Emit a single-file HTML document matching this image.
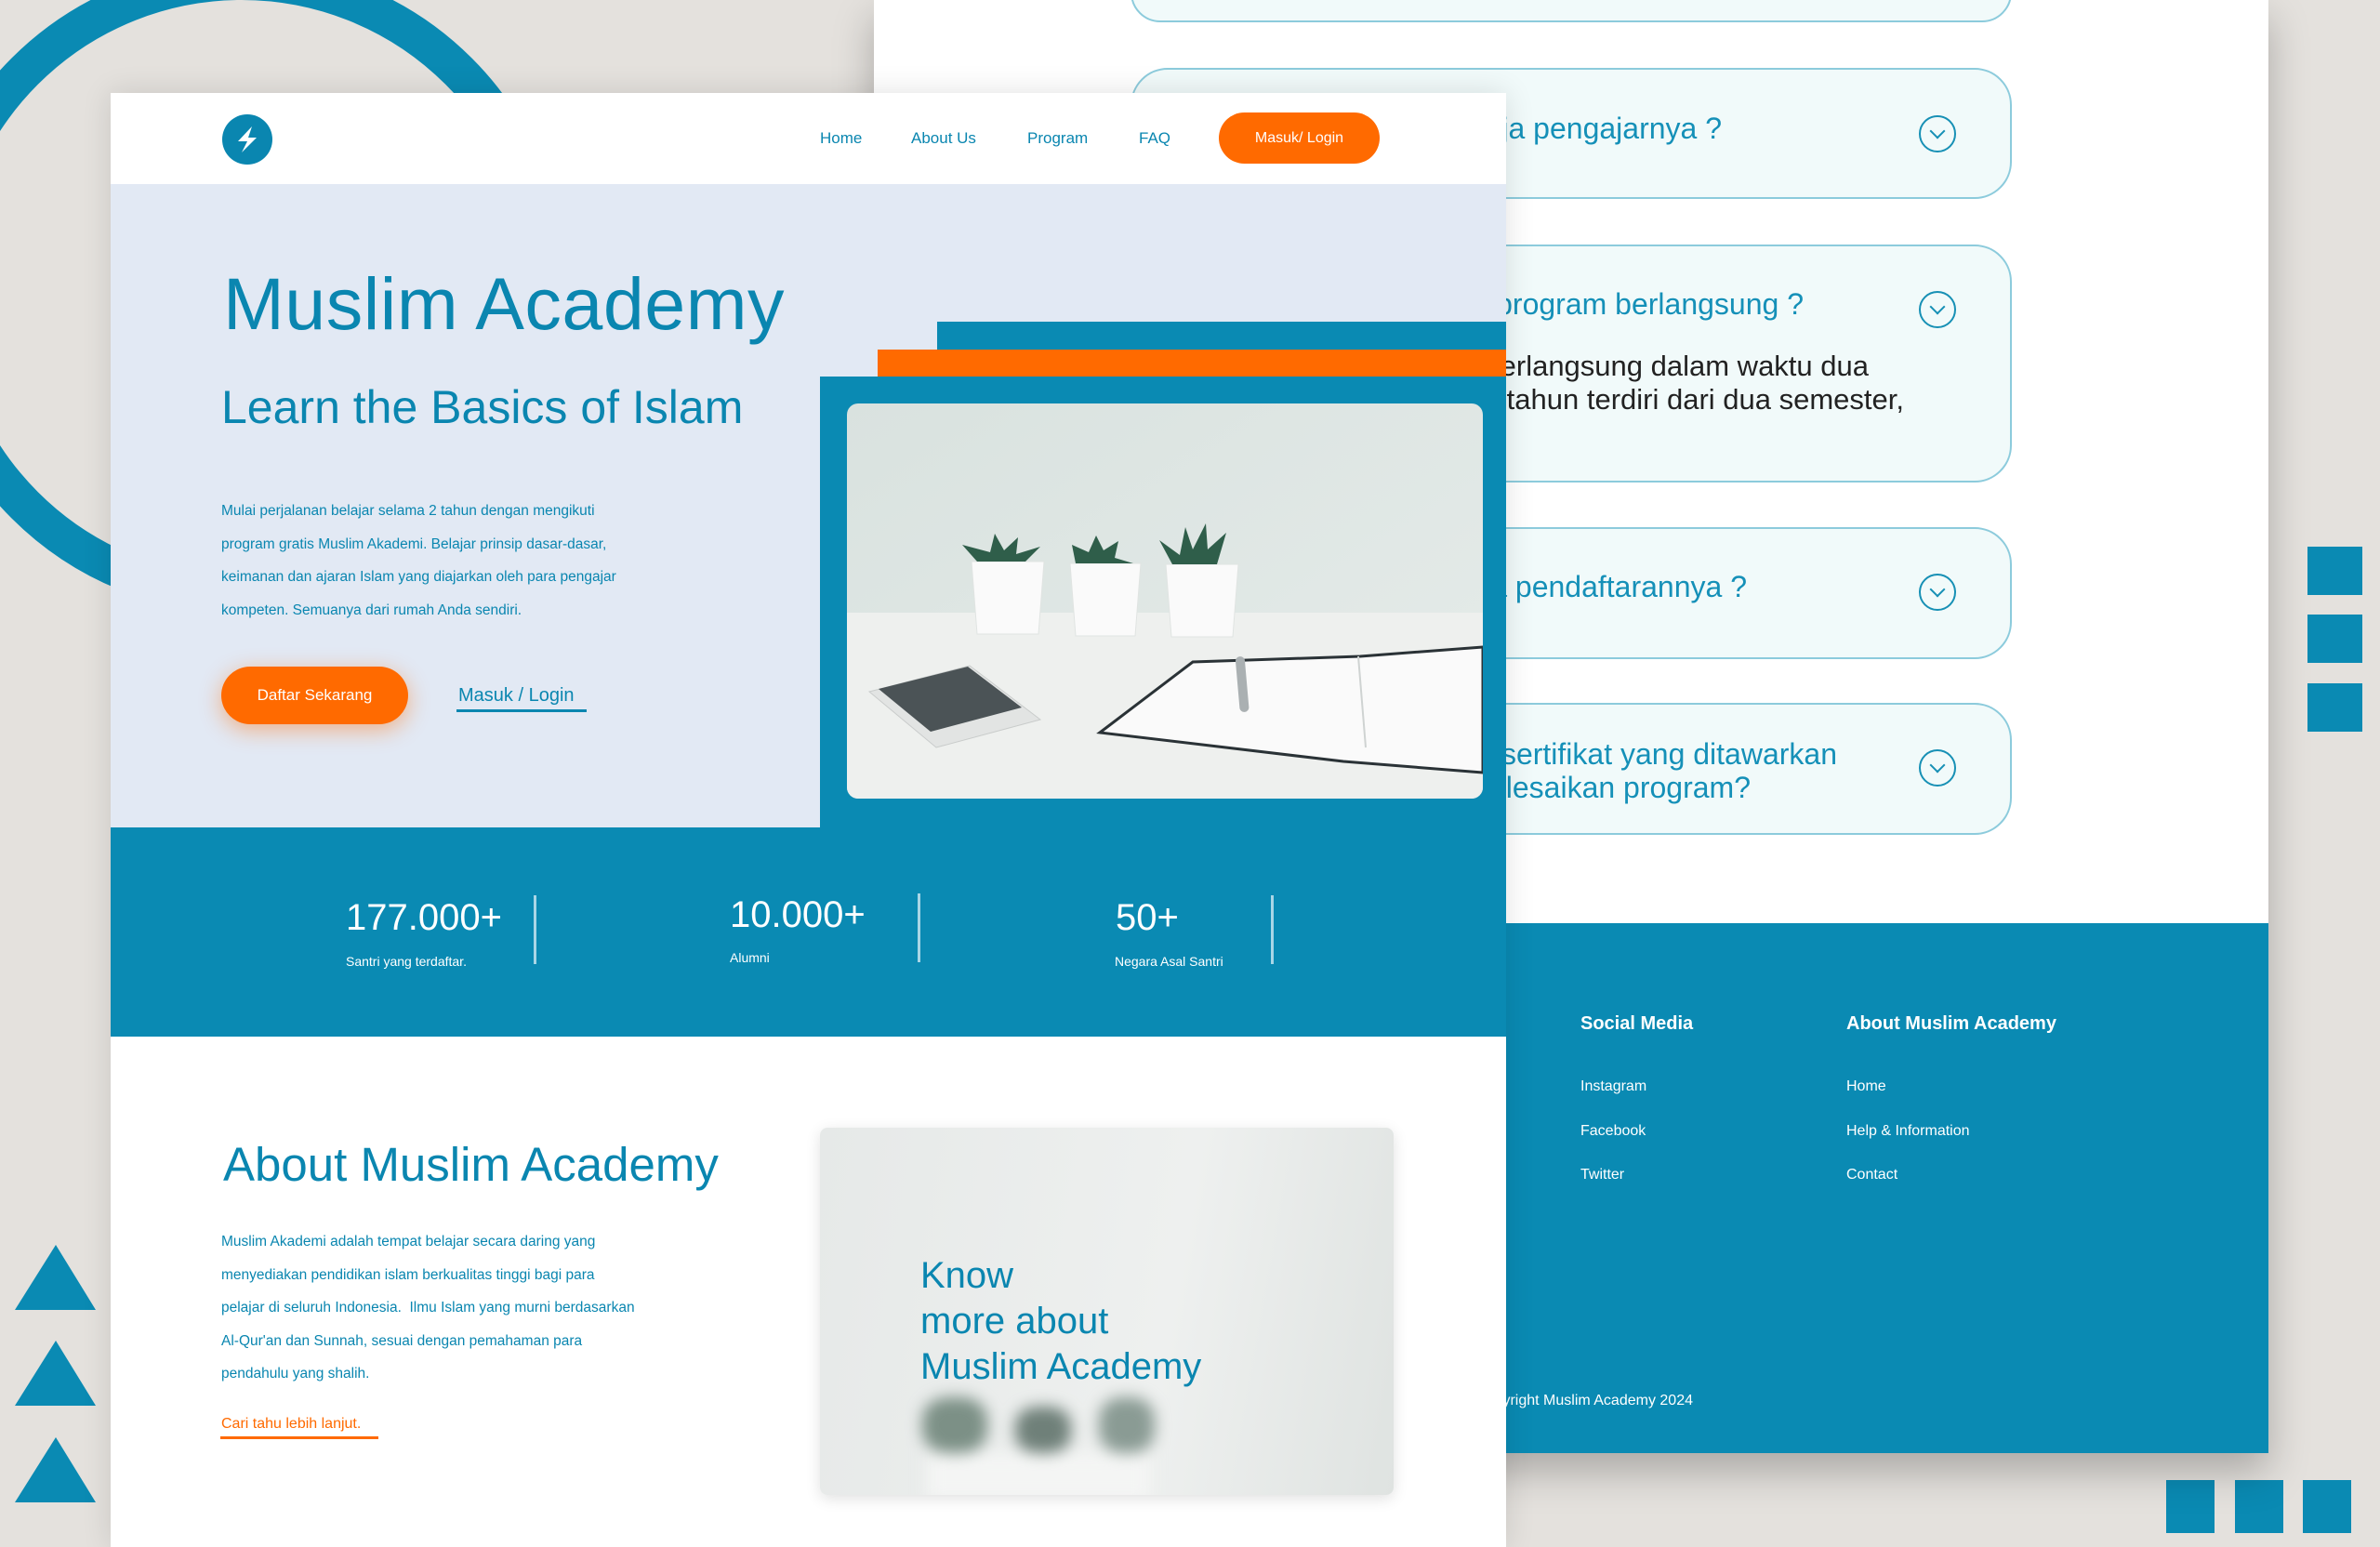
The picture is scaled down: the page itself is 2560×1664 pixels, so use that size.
<!DOCTYPE html>
<html><head><meta charset="utf-8"><style>
*{margin:0;padding:0;box-sizing:border-box}
body{width:2560px;height:1664px;overflow:hidden;background:#e4e1dd;position:relative;font-family:"Liberation Sans",sans-serif}
.a{position:absolute;white-space:nowrap;line-height:1.2}
.blue{color:#0a86b0}
.card{position:absolute;left:1216px;width:948px;background:#f1fafa;border:2px solid #8ccbdc;border-radius:40px}
.chev{position:absolute;left:2064px;width:40px;height:40px;border:2.5px solid #1790b5;border-radius:50%}
.chev:after{content:"";position:absolute;left:12px;top:9px;width:10px;height:10px;border-right:2.5px solid #1790b5;border-bottom:2.5px solid #1790b5;transform:rotate(45deg)}
.q{position:absolute;text-align:right;font-size:32px;color:#1590b8;white-space:nowrap;line-height:1.15}
.sq{position:absolute;background:#0a8ab3}
.fl{position:absolute;color:#fff;font-size:16px;white-space:nowrap}
</style></head><body>

<div style="position:absolute;left:-90px;top:-40px;width:700px;height:700px;border:40px solid #0a8ab3;border-radius:50%"></div>

<div class="sq" style="left:2482px;top:588px;width:59px;height:52px"></div>
<div class="sq" style="left:2482px;top:661px;width:59px;height:52px"></div>
<div class="sq" style="left:2482px;top:735px;width:59px;height:52px"></div>
<div class="sq" style="left:2330px;top:1592px;width:52px;height:57px"></div>
<div class="sq" style="left:2404px;top:1592px;width:52px;height:57px"></div>
<div class="sq" style="left:2477px;top:1592px;width:52px;height:57px"></div>
<svg style="position:absolute;left:0;top:1330px" width="120" height="300">
<polygon points="60,9 16,79 103,79" fill="#0a8ab3"/>
<polygon points="60,112 16,182 103,182" fill="#0a8ab3"/>
<polygon points="60,216 16,286 103,286" fill="#0a8ab3"/>
</svg>

<div style="position:absolute;left:940px;top:0;width:1500px;height:1563px;background:#fff;box-shadow:0 20px 40px rgba(0,0,0,.25)">
  <div style="position:absolute;left:0;top:993px;width:1500px;height:570px;background:#0a8ab3"></div>
</div>
<div class="card" style="top:-40px;height:64px"></div>
<div class="card" style="top:73px;height:141px"></div>
<div class="card" style="top:263px;height:256px"></div>
<div class="card" style="top:567px;height:142px"></div>
<div class="card" style="top:756px;height:142px"></div>
<div class="chev" style="top:124px"></div>
<div class="chev" style="top:313px"></div>
<div class="chev" style="top:617px"></div>
<div class="chev" style="top:806px"></div>
<div class="q" style="right:708px;top:120px">Siapa saja pengajarnya ?</div>
<div class="q" style="right:620px;top:309px">Berapa lama program berlangsung ?</div>
<div class="q" style="right:550px;top:376px;color:#222;font-size:31px;line-height:36px">Program berlangsung dalam waktu dua</div>
<div class="q" style="right:512px;top:412px;color:#222;font-size:31px;line-height:36px">selama dua tahun terdiri dari dua semester,</div>
<div class="q" style="right:681px;top:613px">Bagaimana cara pendaftarannya ?</div>
<div class="q" style="right:584px;top:793px">Apa saja sertifikat yang ditawarkan</div>
<div class="q" style="right:677px;top:829px">setelah menyelesaikan program?</div>

<div class="fl" style="left:1700px;top:1090px;font-size:20px;font-weight:bold">Social Media</div>
<div class="fl" style="left:1986px;top:1090px;font-size:20px;font-weight:bold">About Muslim Academy</div>
<div class="fl" style="left:1700px;top:1160px">Instagram</div>
<div class="fl" style="left:1700px;top:1208px">Facebook</div>
<div class="fl" style="left:1700px;top:1255px">Twitter</div>
<div class="fl" style="left:1986px;top:1160px">Home</div>
<div class="fl" style="left:1986px;top:1208px">Help &amp; Information</div>
<div class="fl" style="left:1986px;top:1255px">Contact</div>
<div class="fl" style="right:739px;top:1498px">Copyright Muslim Academy 2024</div>

<div style="position:absolute;left:119px;top:100px;width:1501px;height:1564px;background:#fff;overflow:hidden;box-shadow:0 0 30px rgba(0,0,0,.12)">
  <div style="position:absolute;left:0;top:98px;width:1501px;height:792px;background:#e2e9f4"></div>
  <div style="position:absolute;left:889px;top:246px;width:612px;height:30px;background:#0a8ab3"></div>
  <div style="position:absolute;left:825px;top:276px;width:676px;height:29px;background:#ff6a00"></div>
  <div style="position:absolute;left:763px;top:305px;width:738px;height:485px;background:#0a8ab3"></div>
  <div style="position:absolute;left:0;top:790px;width:1501px;height:225px;background:#0a8ab3"></div>
</div>

<svg style="position:absolute;left:238px;top:122px" width="56" height="56" viewBox="0 0 56 56">
<circle cx="28" cy="28" r="27" fill="#0a86b0"/>
<path d="M33 14 L18 30 L28 30 L22 42 L38 26 L29 26 Z" fill="#fff"/>
</svg>

<div class="a blue" style="left:882px;top:139px;font-size:17px">Home</div>
<div class="a blue" style="left:980px;top:139px;font-size:17px">About Us</div>
<div class="a blue" style="left:1105px;top:139px;font-size:17px">Program</div>
<div class="a blue" style="left:1225px;top:139px;font-size:17px">FAQ</div>
<div style="position:absolute;left:1311px;top:121px;width:173px;height:55px;background:#ff6a00;border-radius:28px;color:#fff;font-size:16px;text-align:center;line-height:55px">Masuk/ Login</div>

<div class="a blue" style="left:240px;top:280px;font-size:79px;letter-spacing:0.5px">Muslim Academy</div>
<div class="a blue" style="left:238px;top:408px;font-size:50px">Learn the Basics of Islam</div>
<div class="a blue" style="left:238px;top:532px;font-size:15.5px;line-height:35.5px">Mulai perjalanan belajar selama 2 tahun dengan mengikuti<br>program gratis Muslim Akademi. Belajar prinsip dasar-dasar,<br>keimanan dan ajaran Islam yang diajarkan oleh para pengajar<br>kompeten. Semuanya dari rumah Anda sendiri.</div>
<div style="position:absolute;left:238px;top:717px;width:201px;height:62px;background:#ff6a00;border-radius:31px;color:#fff;font-size:17px;text-align:center;line-height:62px;box-shadow:0 6px 24px rgba(255,106,0,.45)">Daftar Sekarang</div>
<div class="a blue" style="left:493px;top:736px;font-size:20px">Masuk / Login</div>
<div style="position:absolute;left:491px;top:763px;width:140px;height:3px;background:#0a86b0"></div>

<svg style="position:absolute;left:911px;top:434px" width="684" height="425" viewBox="0 0 684 425">
<defs><clipPath id="c"><rect width="684" height="425" rx="12"/></clipPath>
<linearGradient id="w" x1="0" y1="0" x2="1" y2="1"><stop offset="0" stop-color="#d9e2df"/><stop offset="1" stop-color="#e6ecea"/></linearGradient></defs>
<g clip-path="url(#c)">
<rect width="684" height="425" fill="url(#w)"/>
<rect y="225" width="684" height="200" fill="#eef0ee"/>
<g fill="#fafafa" stroke="#e0e4e2">
<path d="M134 170 h78 l-6 78 h-66 z"/><path d="M240 172 h76 l-6 78 h-64 z"/><path d="M343 173 h78 l-6 78 h-66 z"/></g>
<g fill="#2f5e4a"><path d="M140 170 l-16 -18 l30 8 l5 -20 l10 18 l15 -14 l-2 18 l26 -8 l-16 16 z"/>
<path d="M246 172 l-4 -20 l18 8 l8 -18 l8 16 l16 -10 l-4 18 l20 6 z"/>
<path d="M350 173 l-14 -26 l22 16 l6 -30 l8 24 l14 -28 l2 28 l20 -18 l-10 34 z"/></g>
<path d="M24 310 l108 -28 l76 58 l-112 30 z" fill="#e2e4e3" stroke="#c9cccb"/>
<path d="M34 307 l96 -24 l58 44 l-98 26 z" fill="#4b5356"/>
<path d="M272 354 l100 -76 l180 -6 l132 -10 l0 135 l-150 -12 z" fill="#fafafa" stroke="#2a3236" stroke-width="3"/>
<path d="M550 272 l8 98" stroke="#cfd3d2" stroke-width="2"/>
<rect x="420" y="272" width="10" height="60" rx="5" fill="#aab0b2" transform="rotate(-5 425 300)"/>
</g></svg>

<div class="a" style="left:372px;top:963px;font-size:40px;color:#fff">177.000+</div>
<div class="a" style="left:372px;top:1026px;font-size:14px;color:#fff">Santri yang terdaftar.</div>
<div style="position:absolute;left:574px;top:963px;width:3px;height:74px;background:#a9d6e6"></div>
<div class="a" style="left:785px;top:960px;font-size:40px;color:#fff">10.000+</div>
<div class="a" style="left:785px;top:1022px;font-size:14px;color:#fff">Alumni</div>
<div style="position:absolute;left:987px;top:961px;width:3px;height:74px;background:#a9d6e6"></div>
<div class="a" style="left:1200px;top:963px;font-size:40px;color:#fff">50+</div>
<div class="a" style="left:1199px;top:1026px;font-size:14px;color:#fff">Negara Asal Santri</div>
<div style="position:absolute;left:1367px;top:963px;width:3px;height:74px;background:#a9d6e6"></div>

<div class="a blue" style="left:240px;top:1222px;font-size:51px">About Muslim Academy</div>
<div class="a blue" style="left:238px;top:1318px;font-size:15.5px;line-height:35.5px">Muslim Akademi adalah tempat belajar secara daring yang<br>menyediakan pendidikan islam berkualitas tinggi bagi para<br>pelajar di seluruh Indonesia.&nbsp; Ilmu Islam yang murni berdasarkan<br>Al-Qur'an dan Sunnah, sesuai dengan pemahaman para<br>pendahulu yang shalih.</div>
<div class="a" style="left:238px;top:1522px;font-size:16px;color:#ff6a00">Cari tahu lebih lanjut.</div>
<div style="position:absolute;left:237px;top:1545px;width:170px;height:3px;background:#ff6a00"></div>

<div style="position:absolute;left:882px;top:1213px;width:617px;height:395px;border-radius:8px;background:linear-gradient(100deg,#e6e9e8,#eef0ef 60%,#dfe3e1);box-shadow:0 4px 16px rgba(0,0,0,.12);overflow:hidden">
  <div style="position:absolute;left:110px;top:290px;width:260px;height:110px;filter:blur(8px)">
    <div style="position:absolute;left:0;top:0;width:70px;height:60px;background:#7c9086;border-radius:40%"></div>
    <div style="position:absolute;left:100px;top:10px;width:60px;height:50px;background:#6f8079;border-radius:40%"></div>
    <div style="position:absolute;left:190px;top:0;width:60px;height:60px;background:#8a9b94;border-radius:40%"></div>
    <div style="position:absolute;left:5px;top:60px;width:240px;height:50px;background:#f4f5f4"></div>
  </div>
</div>
<div class="a blue" style="left:990px;top:1348px;font-size:40px;line-height:49px">Know<br>more about<br>Muslim Academy</div>

</body></html>
